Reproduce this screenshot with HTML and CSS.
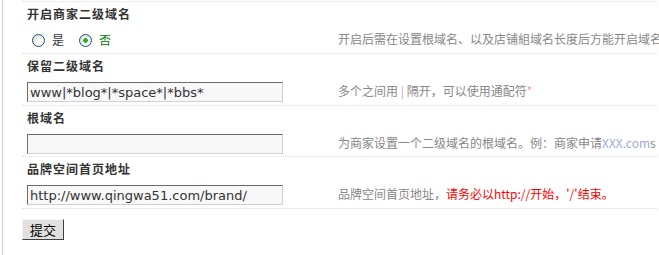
FILE: index.html
```html
<!DOCTYPE html>
<html lang="zh-CN">
<head>
<meta charset="utf-8">
<title>二级域名设置</title>
<link rel="stylesheet" href="styles.css">
</head>
<body>
<div class="frame">
  <form class="form">
    <div class="row">
      <div class="label">开启商家二级域名</div>
      <div class="field-line">
        <div class="field">
          <label class="radio"><input type="radio" name="open" value="1"><span>是</span></label>
          <label class="radio on"><input type="radio" name="open" value="0" checked><span>否</span></label>
        </div>
        <div class="tip">开启后需在设置根域名、以及店铺組域名长度后方能开启域名</div>
      </div>
    </div>
    <div class="row">
      <div class="label">保留二级域名</div>
      <div class="field-line">
        <div class="field"><input class="text" type="text" value="www|*blog*|*space*|*bbs*"></div>
        <div class="tip">多个之间用 <span class="pipe">|</span> 隔开，可以使用通配符<span class="star">*</span></div>
      </div>
    </div>
    <div class="row row-tight">
      <div class="label">根域名</div>
      <div class="field-line">
        <div class="field"><input class="text" type="text" value=""></div>
        <div class="tip">为商家设置一个二级域名的根域名。例：商家申请<span class="sample">XXX.com</span>s</div>
      </div>
    </div>
    <div class="row">
      <div class="label">品牌空间首页地址</div>
      <div class="field-line">
        <div class="field"><input class="text" type="text" value="http://www.qingwa51.com/brand/"></div>
        <div class="tip">品牌空间首页地址，<span class="warn">请务必以http://开始，'/'结束。</span></div>
      </div>
    </div>
    <div class="row row-submit">
      <button class="submit" type="button">提交</button>
    </div>
  </form>
</div>
</body>
</html>
```

FILE: styles.css
```css
html, body {
  margin: 0;
  padding: 0;
  background: #fff;
  overflow: hidden;
}
body {
  font-family: "Noto Sans CJK SC", "DejaVu Sans", sans-serif;
  font-size: 12px;
  color: #333;
  width: 659px;
  height: 255px;
}
.frame {
  margin-left: 2px;
  border-left: 1px solid #bcd4e8;
  height: 255px;
  padding-left: 19px;
  padding-top: 1px;
  box-sizing: border-box;
}
.form {
  width: 800px;
}
.row {
  border-top: 1px dotted #cfe0ee;
}
.label {
  height: 25px;
  line-height: 24px;
  padding-left: 5px;
  font-weight: bold;
  letter-spacing: 1px;
  color: #333;
}
.field-line {
  display: flex;
  align-items: center;
  height: 26px;
}
.row-tight .field-line {
  height: 25px;
}
.field {
  width: 311px;
  padding-left: 5px;
  display: flex;
  align-items: center;
}
.tip {
  color: #888;
  white-space: nowrap;
  line-height: 16px;
  margin-top: -2px;
}
.pipe { color: #c9a3d6; }
.star { color: #f3a0b0; }
.sample { color: #a3abd3; }
.warn { color: #f00; }

.radio {
  display: flex;
  align-items: center;
  margin-left: 5px;
  margin-right: 10px;
  line-height: 16px;
  color: #333;
}
.radio.on { color: #008000; }
.radio input {
  appearance: none;
  -webkit-appearance: none;
  margin: 0 7px 0 0;
  width: 13px;
  height: 13px;
  border-radius: 50%;
  border: 1px solid #1f4f82;
  box-sizing: border-box;
  background: radial-gradient(circle at 65% 65%, #ffffff 0%, #f2f2ee 45%, #d6d6cf 100%);
}
.radio input:checked {
  background:
    radial-gradient(circle at 50% 50%, #2fbf2f 0, #21a121 2px, transparent 2.5px),
    radial-gradient(circle at 65% 65%, #ffffff 0%, #f2f2ee 45%, #d6d6cf 100%);
}

.text {
  width: 256px;
  height: 20px;
  box-sizing: border-box;
  margin: 0;
  padding: 0 2px;
  border-style: solid;
  border-width: 1px;
  border-color: #6b6b6b #d0d0d0 #d0d0d0 #6b6b6b;
  background: #f8f8f8;
  font-family: "DejaVu Sans", Verdana, sans-serif;
  font-size: 13px;
  color: #333;
  outline: none;
}

.row-submit {
  padding-top: 10px;
}
.submit {
  display: block;
  width: 42px;
  height: 21px;
  margin: 0;
  padding: 0;
  border-style: solid;
  border-width: 1px;
  border-color: #f4f4f4 #404040 #404040 #f4f4f4;
  background: #e0e0e0;
  font-family: "Noto Sans CJK SC", sans-serif;
  font-size: 13px;
  line-height: 17px;
  color: #000;
}
```
